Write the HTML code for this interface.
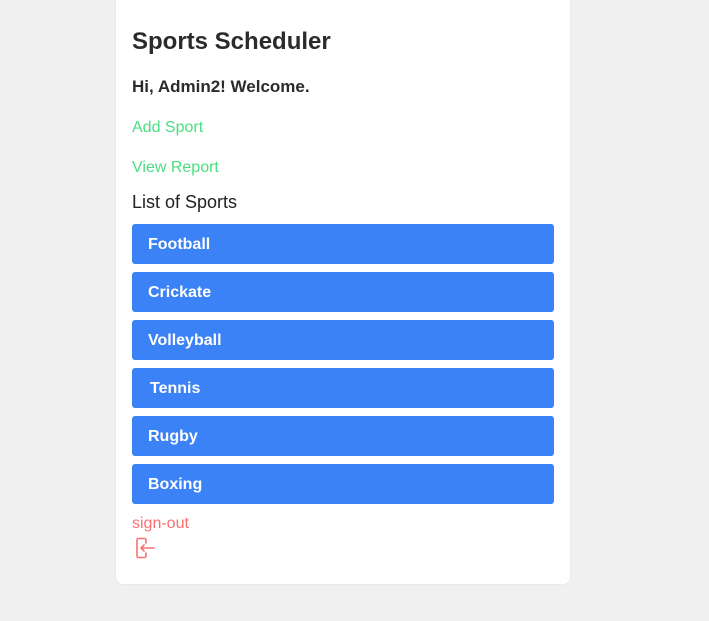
<!DOCTYPE html>
<html><head><style>
body{margin:0;background:#f0f0f0;font-family:"Liberation Sans",Arial,sans-serif;width:709px;height:621px;overflow:hidden;position:relative}
.card{position:absolute;left:116px;top:-8px;width:454px;height:592px;background:#fff;border-radius:7px;box-shadow:0 0 1px #ccc}
.t{position:absolute;left:16px;white-space:nowrap}
h1{margin:0;font-size:24px;font-weight:bold;color:#2b2b2b}
.hi{font-size:17px;font-weight:bold;color:#2b2b2b}
.g{font-size:16px;color:#4ade80}
.l{font-size:18px;color:#222}
.b{position:absolute;left:16px;width:422px;height:40px;background:#3b82f6;border-radius:3px;color:#fff;font-weight:bold;font-size:16px;line-height:41px;box-sizing:border-box;padding-left:16px}
.r{font-size:16px;color:#f87171}
</style></head><body>
<div class="card">
<h1 class="t" style="top:36px">Sports Scheduler</h1>
<div class="t hi" style="top:85px">Hi, Admin2! Welcome.</div>
<div class="t g" style="top:127px">Add Sport</div>
<div class="t g" style="top:167px">View Report</div>
<div class="t l" style="top:200px">List of Sports</div>
<div class="b" style="top:232px">Football</div>
<div class="b" style="top:280px">Crickate</div>
<div class="b" style="top:328px">Volleyball</div>
<div class="b" style="top:376px;padding-left:18px">Tennis</div>
<div class="b" style="top:424px">Rugby</div>
<div class="b" style="top:472px">Boxing</div>
<div class="t r" style="top:523px">sign-out</div>
<svg style="position:absolute;left:18px;top:544px" width="24" height="24" viewBox="0 0 24 24" fill="none" stroke="#f87171" stroke-width="1.6" stroke-linecap="round" stroke-linejoin="round">
<path d="M12 7V4a1.5 1.5 0 0 0-1.5-1.5h-6A1.5 1.5 0 0 0 3 4v16a1.5 1.5 0 0 0 1.5 1.5h6A1.5 1.5 0 0 0 12 20v-3"/>
<path d="M20 12H7M10 9l-3 3 3 3"/>
</svg>
</div>
</body></html>
